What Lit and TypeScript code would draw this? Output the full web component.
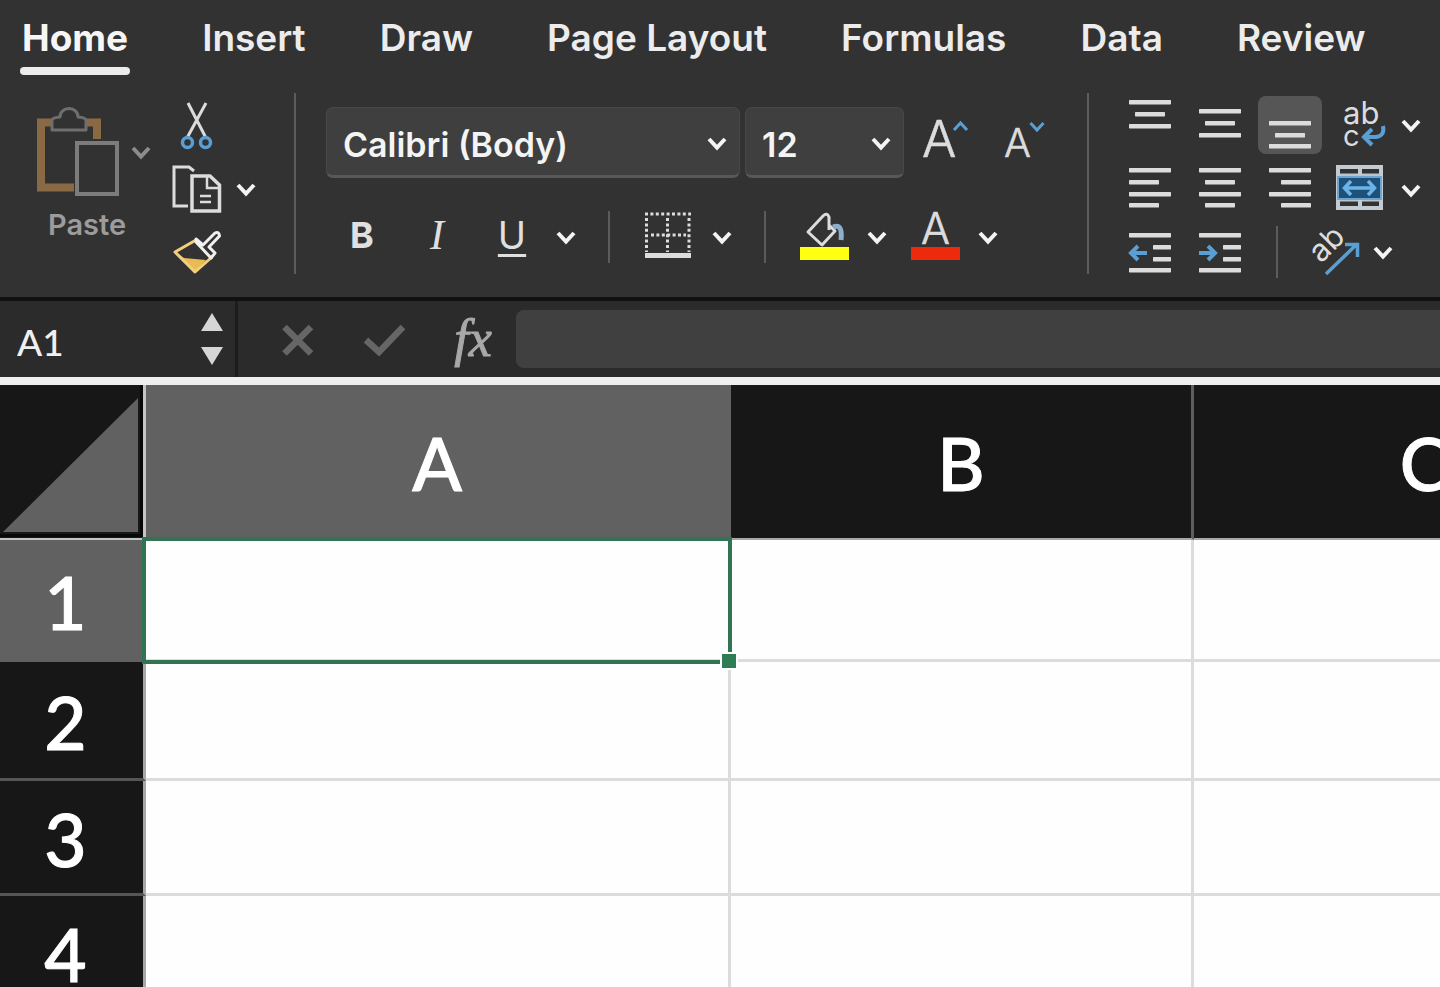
import { LitElement, html, svg, css } from "lit";
import { customElement, state } from "lit/decorators.js";

const W = "#dcdcdc";
const BLUE = "#5a9fd4";

/* Icons share one artboard; each view frames its own region of it. */
const art = (x: number, y: number, w: number, h: number, body: unknown) =>
  html`<svg width=${w} height=${h} viewBox="${x} ${y} ${w} ${h}" fill="none" aria-hidden="true">${body}</svg>`;

const chevron = (color = "#f4f4f4") =>
  html`<svg width="22" height="18" viewBox="0 0 22 18" fill="none" aria-hidden="true">
    <path d="M3 5 L11 13.5 L19 5" stroke=${color} stroke-width="4" />
  </svg>`;

const bars = (rows: number[][]) =>
  rows.map(([x, y, w]) => svg`<rect x=${x} y=${y} width=${w} height="4.4" rx="0.6" fill=${W} />`);

const alignIcons = [
  [
    { name: "Top Align", rows: [[11, 4, 42], [17, 16, 30], [11, 28, 42]] },
    { name: "Middle Align", rows: [[11, 13, 42], [17, 25, 30], [11, 37, 42]] },
    { name: "Bottom Align", rows: [[11, 25, 42], [17, 37, 30], [11, 48, 42]], on: true },
  ],
  [
    { name: "Align Left", rows: [[11, 7, 42], [11, 19, 30], [11, 31, 42], [11, 42, 30]] },
    { name: "Center", rows: [[11, 7, 42], [17, 19, 30], [11, 31, 42], [17, 42, 30]] },
    { name: "Align Right", rows: [[11, 7, 42], [23, 19, 30], [11, 31, 42], [23, 42, 30]] },
  ],
];

@customElement("app-root")
export class AppRoot extends LitElement {
  @state() private tab = "Home";

  static styles = css`
    :host {
      display: flex;
      flex-direction: column;
      height: 100vh;
      overflow: hidden;
      background: #fff;
      color: #ececec;
      font-family: Inter, "Liberation Sans", sans-serif;
    }
    *,
    *::after {
      box-sizing: border-box;
    }
    svg {
      display: block;
      flex: none;
      overflow: visible;
    }
    svg text {
      font-family: Inter, sans-serif;
    }
    button,
    input,
    select {
      margin: 0;
      padding: 0;
      border: 0;
      background: none;
      color: inherit;
      font: inherit;
      border-radius: 0;
    }
    button {
      display: block;
      flex: none;
    }
    .tabs {
      display: flex;
      gap: 74px;
      padding: 15px 22px 0;
      background: #323232;
      overflow: hidden;
    }
    .tab {
      font-size: 37px;
      line-height: 46px;
      font-weight: 600;
      white-space: nowrap;
    }
    .tab::after {
      content: "";
      display: block;
      height: 8px;
      margin: 6px -2px 0;
      border-radius: 4px;
    }
    .tab.on {
      font-weight: 700;
      color: #f6f6f6;
    }
    .tab.on::after {
      background: #ececec;
    }
    .ribbon {
      display: flex;
      align-items: flex-start;
      padding: 18px 0 19px;
      background: #323232;
      border-bottom: 4px solid #111;
    }
    .rule {
      flex: none;
      width: 2px;
      height: 181px;
      background: #5c5c5c;
    }
    .rule.short {
      height: 52px;
    }
    .row {
      display: flex;
      align-items: center;
    }
    .clipboard {
      display: flex;
      align-items: flex-start;
      gap: 20px;
      padding: 8px 37px 0 36px;
    }
    .paste {
      padding-top: 6px;
      color: #9c9c9c;
      text-align: left;
    }
    .paste .row {
      gap: 10px;
    }
    .paste-label {
      display: block;
      padding-left: 12px;
      margin-top: 10px;
      font-size: 29px;
      line-height: 36px;
      font-weight: 600;
    }
    .stack {
      display: flex;
      flex-direction: column;
      gap: 10px;
    }
    .stack .row {
      gap: 13px;
    }
    .font {
      flex: 1;
      min-width: 0;
      padding: 14px 40px 0 30px;
    }
    .pick {
      display: grid;
      align-items: center;
      min-width: 0;
    }
    .pick.name {
      flex: 1;
      margin-right: 5px;
    }
    .pick.size {
      flex: 0 0 159px;
      margin-right: 18px;
    }
    .pick select,
    .pick svg {
      grid-area: 1 / 1;
    }
    .pick svg {
      justify-self: end;
      margin-right: 12px;
      pointer-events: none;
    }
    .pick select {
      appearance: none;
      width: 100%;
      height: 71px;
      padding: 5px 0 0 16px;
      background: #3f3f3f;
      border: 1px solid #484848;
      border-bottom: 3px solid #585858;
      border-radius: 7px;
      color: #f4f4f4;
      font-size: 34px;
      font-weight: 600;
    }
    .grow {
      margin-right: 32px;
    }
    .tools {
      margin-top: 27px;
      padding-left: 13px;
    }
    .letter {
      width: 46px;
      margin-right: 29px;
      height: 64px;
      padding-bottom: 5px;
      font-size: 38px;
      line-height: 58px;
      text-align: center;
      color: #e0e0e0;
    }
    .bold {
      font-weight: 700;
      font-size: 36px;
    }
    .italic {
      font-family: "Liberation Serif", serif;
      font-style: italic;
      font-size: 42px;
    }
    .under {
      font-weight: 400;
      margin-right: 20px;
      text-decoration: underline;
      text-decoration-thickness: 3px;
      text-underline-offset: 5px;
      text-decoration-skip-ink: none;
    }
    .tools .rule {
      margin: 0 34px 0 31px;
    }
    .swatch {
      margin-right: 17px;
    }
    .borders {
      margin-right: 19px;
    }
    .fill-more {
      margin-right: 23px;
    }
    .align {
      flex: none;
      display: flex;
      flex-direction: column;
      gap: 7px;
      padding: 3px 18px 0 29px;
    }
    .align .row {
      gap: 6px;
    }
    .cell {
      border-radius: 8px;
    }
    .cell.on {
      background: #565656;
    }
    .wrap {
      margin: 0 8px;
    }
    .align .rule {
      margin: 0 22px 0 18px;
    }
    .turn {
      margin-right: 6px;
    }
    .formula {
      display: flex;
      align-items: center;
      height: 76px;
      flex: none;
      background: #2b2b2b;
    }
    .ref {
      width: 180px;
      padding: 5px 0 0 17px;
      font-family: Lato, sans-serif;
      font-size: 37px;
      line-height: 48px;
      font-weight: 500;
      color: #f0f0f0;
    }
    .steps {
      display: flex;
      flex-direction: column;
      gap: 16px;
      margin: 0 12px 0 21px;
    }
    .edge {
      width: 3px;
      align-self: stretch;
      background: #1c1c1c;
      margin-right: 44px;
    }
    .cancel {
      margin-right: 50px;
    }
    .fx {
      width: 62px;
      margin: 0 12px 0 36px;
      font-family: "Liberation Serif", serif;
      font-style: italic;
      -webkit-text-stroke: 1px #a8a8a8;
      font-size: 52px;
      line-height: 58px;
      color: #a8a8a8;
    }
    .entry {
      flex: 1;
      min-width: 0;
      height: 58px;
      padding: 0 16px;
      background: #404040;
      border-radius: 8px 0 0 8px;
      font-size: 34px;
    }
    .sheet {
      flex: 1;
      min-height: 0;
      overflow: hidden;
      border-top: 8px solid #efefef;
    }
    table {
      table-layout: fixed;
      width: 1px;
      border-collapse: separate;
      border-spacing: 0;
      font-family: Lato, sans-serif;
      font-size: 73px;
      line-height: 88px;
      color: #fff;
      -webkit-text-stroke: 1px #fff;
    }
    .c-head {
      width: 146px;
    }
    .c-wide {
      width: 585px;
    }
    .c-std {
      width: 463px;
    }
    th {
      padding: 2px 0 0;
      font-weight: 500;
      background: #171717;
      border-right: 3px solid #5e5e5e;
    }
    thead th {
      height: 155px;
      border-bottom: 2px solid #a8a8a8;
    }
    thead th.on {
      border-right-color: #616161;
    }
    tbody th {
      padding: 4px 12px 0 0;
      border-right-color: #a8a8a8;
      border-bottom: 3px solid #555;
    }
    th.on {
      background: #616161;
    }
    tbody th.on {
      border-bottom-color: #616161;
    }
    thead th.corner {
      padding: 0;
      border-right-color: #c4c4c4;
      border-bottom-color: #c4c4c4;
    }
    td {
      padding: 0;
      background: #fefefe;
      border-right: 3px solid #dcdcdc;
      border-bottom: 3px solid #dcdcdc;
    }
    td.active {
      position: relative;
    }
    .r1 {
      height: 122px;
    }
    .r2 {
      height: 119px;
    }
    .r3 {
      height: 115px;
    }
    .selection {
      position: absolute;
      inset: -3px -4px -5px -4px;
      border: 4px solid #317352;
    }
    .selection::after {
      content: "";
      position: absolute;
      right: -10px;
      bottom: -10px;
      width: 18px;
      height: 18px;
      background: #2f7d55;
      border: 2px solid #fff;
    }
  `;

  private ribbon() {
    return html`
      <div class="ribbon">
        <div class="clipboard">
          <button class="paste">
            <span class="row">
              ${art(36, 107, 84, 90, svg`
                <path d="M52 122.500H41V187.500H74M86 122.500H97V139" stroke="#8a6a45" stroke-width="8" />
                <path d="M52 130V120Q53 117.500 60 117C60 112 64 108.500 69 108.500C74 108.500 78 112 78 117Q85 117.500 86 120V130Z" fill="#323232" stroke="#6e6e6e" stroke-width="3" stroke-linejoin="round" />
                <rect x="77" y="143" width="40" height="51" fill="#323232" stroke="#7c7c7c" stroke-width="4" />`)}
              ${chevron("#8c8c8c")}
            </span>
            <span class="paste-label">Paste</span>
          </button>
          <div class="stack">
            <button aria-label="Cut">
              ${art(172, 101, 50, 52, svg`
                <path d="M188 103L206 138M206 103L187 138" stroke=${W} stroke-width="3" />
                <circle cx="187.500" cy="142.500" r="5" stroke=${BLUE} stroke-width="3.500" />
                <circle cx="205.500" cy="142.500" r="5" stroke=${BLUE} stroke-width="3.500" />`)}
            </button>
            <div class="row">
              <button aria-label="Copy">
                ${art(172, 163, 50, 52, svg`
                  <path d="M188 206H174V167H189L194 171" stroke=${W} stroke-width="3" />
                  <path d="M192 176H210L219.500 185V211H192Z" stroke=${W} stroke-width="3.500" />
                  <path d="M207 177V188H219M200 196H211M200 202H211" stroke=${W} stroke-width="2.500" />`)}
              </button>
              <button aria-label="Copy options">${chevron()}</button>
            </div>
            <button aria-label="Format Painter">
              ${art(172, 225, 50, 52, svg`
                <path d="M175 252L184 258L206 260L195 272Z" fill="#e8bb55" />
                <path d="M196 240L175 252L195 272L212 257" stroke="#f3cf7c" stroke-width="3" stroke-linejoin="round" />
                <path d="M196 239L203 245L215 233Q219 231 219.500 236L209 247L215 253L211 258L196 242Z" stroke="#f0f0f0" stroke-width="3" stroke-linejoin="round" />`)}
            </button>
          </div>
        </div>
        <div class="rule"></div>
        <div class="font">
          <div class="row">
            <div class="pick name">
              <select aria-label="Font"><option>Calibri (Body)</option></select>
              ${chevron()}
            </div>
            <div class="pick size">
              <select aria-label="Font size"><option>12</option></select>
              ${chevron()}
            </div>
            <button class="grow" aria-label="Increase font size">
              ${art(922, 107, 48, 70, svg`
                <text x="922" y="156" font-size="51" font-weight="300" fill=${W} stroke=${W} stroke-width="0.6">A</text>
                <path d="M954 129L960.500 122L967 129" stroke=${BLUE} stroke-width="3" />`)}
            </button>
            <button aria-label="Decrease font size">
              ${art(1002, 107, 45, 70, svg`
                <text x="1004" y="156" font-size="40" font-weight="300" fill=${W} stroke=${W} stroke-width="0.6">A</text>
                <path d="M1030.500 122L1037 129L1043.500 122" stroke=${BLUE} stroke-width="3" />`)}
            </button>
          </div>
          <div class="row tools">
            <button class="letter bold">B</button>
            <button class="letter italic">I</button>
            <button class="letter under">U</button>
            <button aria-label="Underline options">${chevron()}</button>
            <div class="rule short"></div>
            <button class="borders" aria-label="Borders">
              ${art(644, 210, 48, 54, svg`
                <path d="M645 214H691M651 235H686" stroke=${W} stroke-width="3" stroke-dasharray="3 2.400" />
                <path d="M646.500 218V252M667.500 218V252M689 218V252" stroke=${W} stroke-width="3" stroke-dasharray="3 2.400" />
                <rect x="645" y="253" width="46" height="5" fill=${W} />`)}
            </button>
            <button aria-label="Border options">${chevron()}</button>
            <div class="rule short"></div>
            <button class="swatch" aria-label="Fill Color">
              ${art(800, 210, 49, 54, svg`
                <path d="M829 230V217Q827 212 823 216L808 232L822 245L835 231L829 225" stroke=${W} stroke-width="3" stroke-linejoin="round" />
                <path d="M833 227Q843 223 841 240" stroke="#8faecb" stroke-width="5" />
                <rect x="800" y="247" width="49" height="13" fill="#ffff12" />`)}
            </button>
            <button class="fill-more" aria-label="Fill options">${chevron()}</button>
            <button class="swatch" aria-label="Font Color">
              ${art(911, 210, 49, 54, svg`
                <text x="921" y="244" font-size="43" font-weight="300" fill=${W} stroke=${W} stroke-width="0.6">A</text>
                <rect x="911" y="247" width="49" height="13" fill="#ee2a0c" />`)}
            </button>
            <button aria-label="Font color options">${chevron()}</button>
          </div>
        </div>
        <div class="rule"></div>
        <div class="align">
          ${alignIcons.map(
            (line, i) => html`<div class="row">
              ${line.map(
                (b: any) => html`<button class="cell ${b.on ? "on" : ""}" aria-label=${b.name}>
                  ${art(0, 0, 64, 58, bars(b.rows))}
                </button>`
              )}
              <button class="wrap" aria-label=${i ? "Merge" : "Wrap Text"}>
                ${i
                  ? art(1336, 161, 50, 58, svg`
                      <rect x="1338" y="167" width="43" height="41" stroke="#c2cbd2" stroke-width="4" />
                      <path d="M1340 175H1380M1340 200H1380" stroke="#b9c4cc" stroke-width="3" />
                      <path d="M1360 167V175M1360 200V208" stroke="#c2cbd2" stroke-width="4" />
                      <rect x="1338" y="177" width="43" height="22" fill="#1f5078" stroke="#6ba6d3" stroke-width="2" />
                      <path d="M1345 188H1374M1351 181L1344.500 188L1351 195M1368 181L1374.500 188L1368 195" stroke="#6bb4ea" stroke-width="3.500" />`)
                  : art(1336, 96, 50, 58, svg`
                      <text x="1343" y="124" font-size="31" fill=${W}>ab</text>
                      <text x="1343" y="146" font-size="29" fill=${W}>c</text>
                      <path d="M1383 126Q1385 136 1376 137H1364M1372 129L1364 137L1372 145" stroke=${BLUE} stroke-width="4" />`)}
              </button>
              <button aria-label="More">${chevron()}</button>
            </div>`
          )}
          <div class="row">
            <button class="cell" aria-label="Decrease Indent">
              ${art(0, 0, 64, 51, svg`${bars([[11, 6, 42], [35, 18, 18], [35, 30, 18], [11, 41, 42]])}
                <path d="M13 26H29M20 19L13 26L20 33" stroke=${BLUE} stroke-width="4" />`)}
            </button>
            <button class="cell" aria-label="Increase Indent">
              ${art(0, 0, 64, 51, svg`${bars([[11, 6, 42], [35, 18, 18], [35, 30, 18], [11, 41, 42]])}
                <path d="M11 26H27M20 19L27 26L20 33" stroke=${BLUE} stroke-width="4" />`)}
            </button>
            <div class="rule short"></div>
            <button class="turn" aria-label="Orientation">
              ${art(1306, 226, 54, 51, svg`
                <text x="1321" y="263" font-size="31" fill=${W} transform="rotate(-45 1321 263)">ab</text>
                <path d="M1326 273L1357 243M1345 243.500H1357.500V256" stroke=${BLUE} stroke-width="3.500" />`)}
            </button>
            <button aria-label="Orientation options">${chevron()}</button>
          </div>
        </div>
      </div>
    `;
  }

  render() {
    const tabs = ["Home", "Insert", "Draw", "Page Layout", "Formulas", "Data", "Review"];
    return html`
      <nav class="tabs">
        ${tabs.map(
          (t) => html`<button class="tab ${t === this.tab ? "on" : ""}" @click=${() => (this.tab = t)}>${t}</button>`
        )}
      </nav>
      ${this.ribbon()}
      <div class="formula">
        <input class="ref" aria-label="Name box" .value=${"A1"} />
        <div class="steps">
          <button aria-label="Previous">${art(0, 0, 22, 18, svg`<path d="M0 18L11 0L22 18Z" fill="#d6d6d6" />`)}</button>
          <button aria-label="Next">${art(0, 0, 22, 18, svg`<path d="M0 0L11 18L22 0Z" fill="#d6d6d6" />`)}</button>
        </div>
        <div class="edge"></div>
        <button class="cancel" aria-label="Cancel">
          ${art(282, 324, 32, 32, svg`<path d="M284.500 328L311 354.500M311 328L284.500 354.500" stroke="#666" stroke-width="6.500" />`)}
        </button>
        <button aria-label="Enter">
          ${art(364, 324, 42, 32, svg`<path d="M366 341L379 353L403 328" stroke="#666" stroke-width="6.500" />`)}
        </button>
        <button class="fx" aria-label="Insert function">fx</button>
        <input class="entry" aria-label="Formula" />
      </div>
      <main class="sheet">
        <table>
          <colgroup>
            <col class="c-head" />
            <col class="c-wide" />
            <col class="c-std" />
            <col class="c-std" />
          </colgroup>
          <thead>
            <tr>
              <th class="corner">
                ${art(0, 0, 143, 153, svg`<path d="M3 147L138 13V147Z" fill="#616161" /><path d="M0 150.500H141.500V0" stroke="#080808" stroke-width="3" />`)}
              </th>
              <th class="on" scope="col">A</th>
              <th scope="col">B</th>
              <th scope="col">C</th>
            </tr>
          </thead>
          <tbody>
            ${[1, 2, 3, 4].map(
              (n) => html`<tr class="r${Math.min(n, 3)}">
                <th class=${n === 1 ? "on" : ""} scope="row">${n}</th>
                <td class=${n === 1 ? "active" : ""}>${n === 1 ? html`<div class="selection"></div>` : ""}</td>
                <td></td>
                <td></td>
              </tr>`
            )}
          </tbody>
        </table>
      </main>
    `;
  }
}
